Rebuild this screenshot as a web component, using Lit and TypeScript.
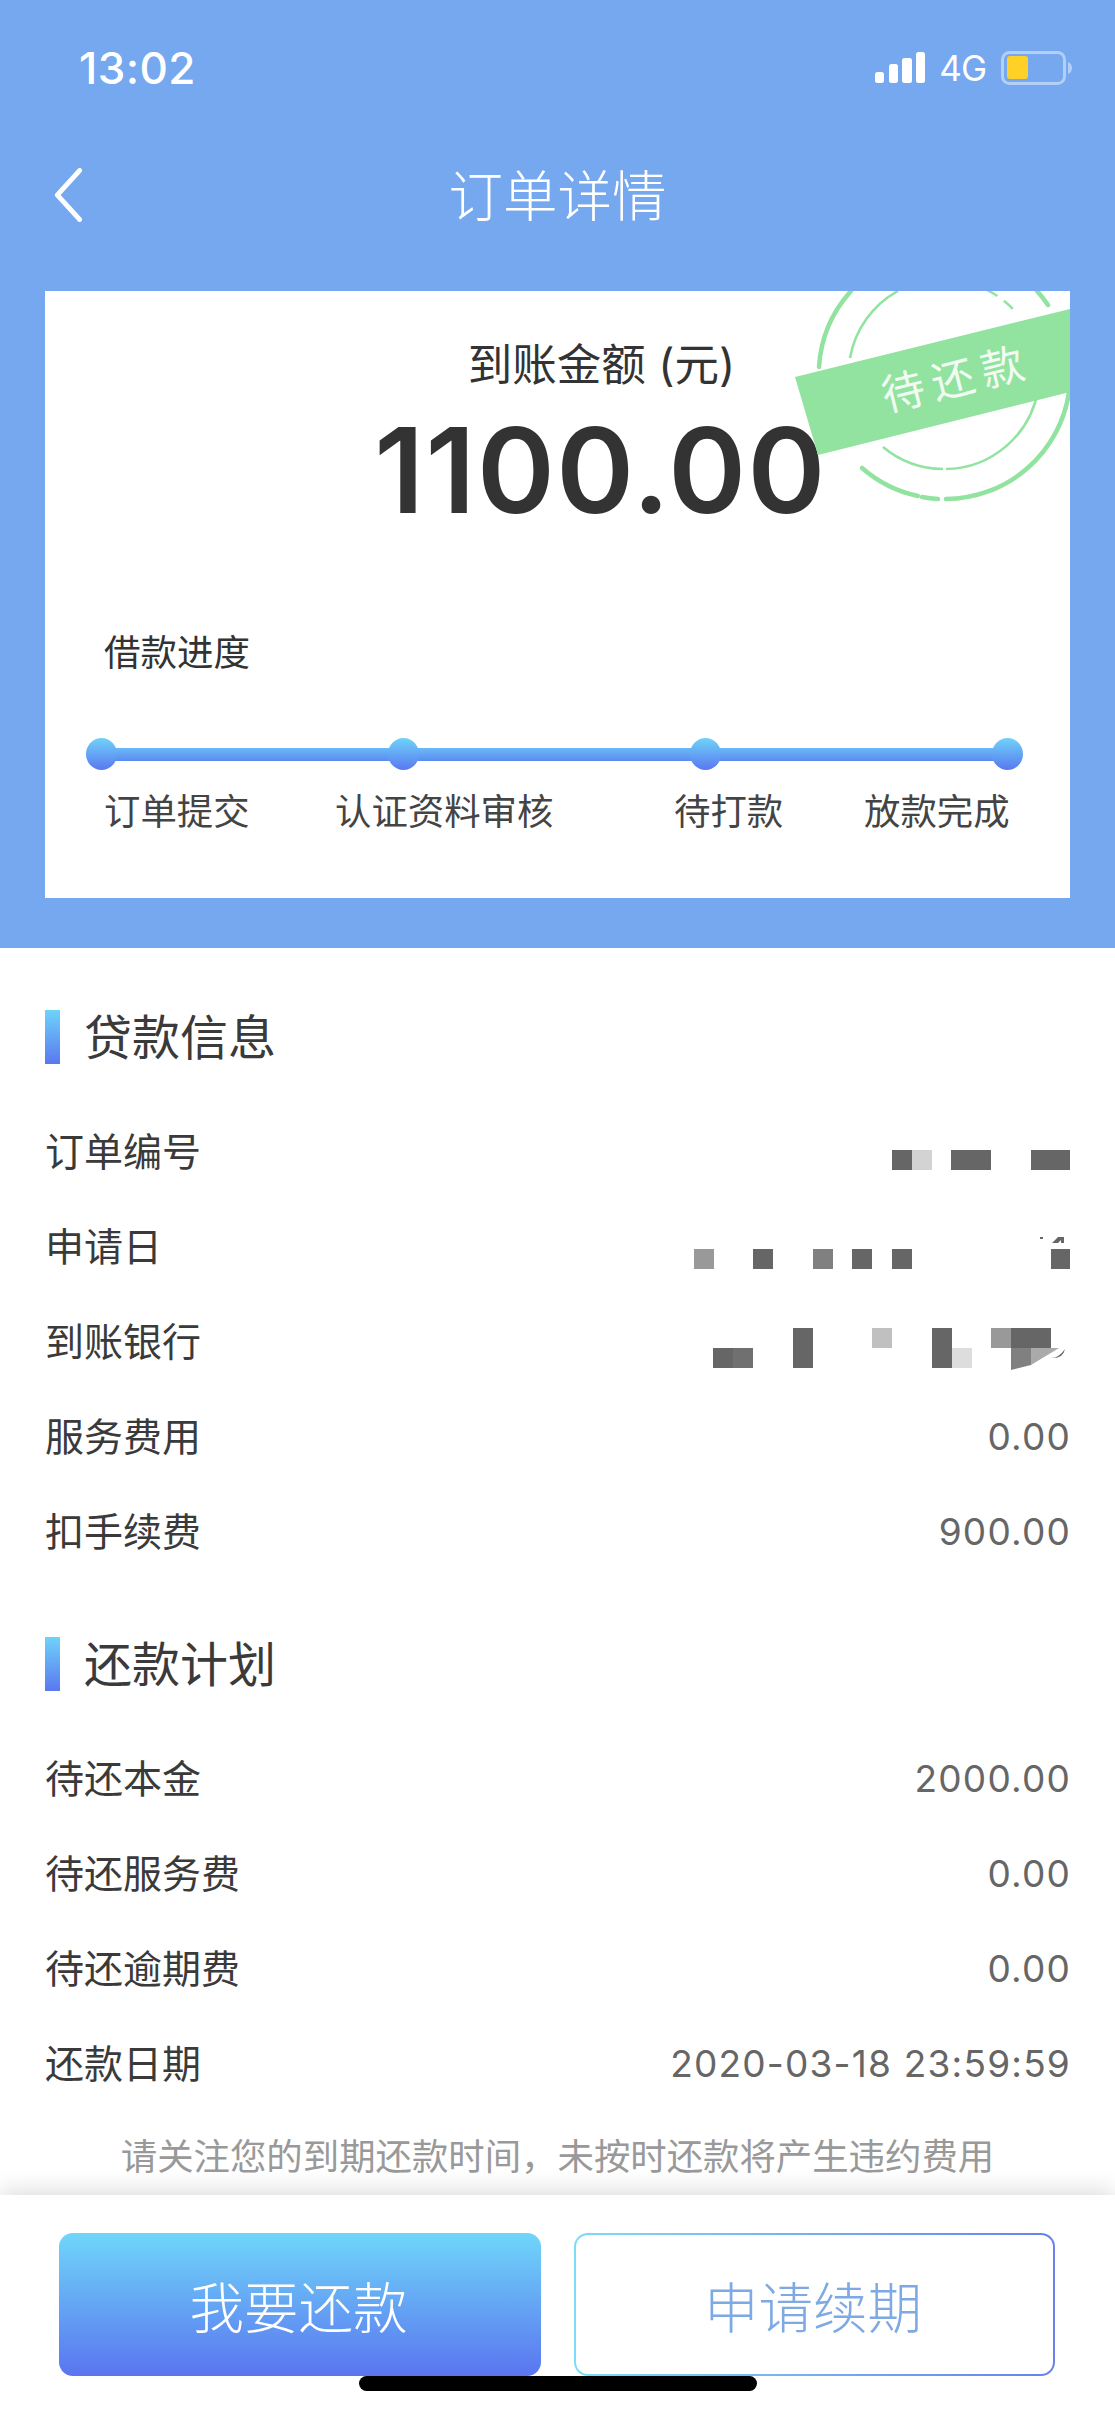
import { LitElement, html, css, svg } from "lit";
import { customElement } from "lit/decorators.js";

type Tile = [number, number, number, number, string];

const RED1: Tile[] = [
  [892, 0, 20, 20, "#666"], [912, 0, 20, 20, "#d3d3d3"], [951, 0, 40, 20, "#666"], [1031, 0, 39, 20, "#666"],
];
const RED2: Tile[] = [
  [694, 0, 20, 20, "#999"], [753, 0, 20, 20, "#666"], [813, 0, 20, 20, "#808080"],
  [852, 0, 20, 20, "#666"], [892, 0, 20, 20, "#666"], [1051, 0, 19, 20, "#666"],
];
const RED3: Tile[] = [
  [713, 20, 20, 20, "#666"], [733, 20, 20, 20, "#707070"], [793, 0, 20, 40, "#666"],
  [872, 0, 20, 20, "#c0c0c0"], [932, 0, 20, 40, "#666"], [952, 20, 20, 20, "#ddd"],
  [991, 0, 20, 20, "#999"], [1011, 0, 40, 20, "#666"],
];

const redact = (tiles: Tile[], top: number, extra?: unknown) => html`<svg class="redact" width="376" height="60" viewBox="694 ${-top} 376 60">
  ${tiles.map(([x, y, w, h, c]) => svg`<rect x=${x} y=${y} width=${w} height=${h} fill=${c}></rect>`)}
  ${extra ?? ""}
</svg>`;

@customElement("app-root")
export class AppRoot extends LitElement {
  static styles = css`
    :host {
      display: block;
      position: relative;
      width: 1115px;
      height: 2415px;
      overflow: hidden;
      background: #fff;
      font-family: Inter, "Noto Sans CJK SC", sans-serif;
      color: #333;
    }
    .page { display: flex; flex-direction: column; height: 2415px; }
    .hero { background: #75a8ee; padding: 0 45px 50px; height: 948px; box-sizing: border-box; }
    .status {
      height: 136px; margin: 0 -3px 0 34px;
      display: flex; align-items: center; justify-content: space-between; color: #fff;
    }
    .time { font-size: 44px; font-weight: 500; letter-spacing: 0.4px; }
    .sys { display: flex; align-items: center; }
    .net { font-size: 35px; margin: 0 15px 0 14px; line-height: 40px; letter-spacing: -1px; }
    .nav { height: 118px; position: relative; display: flex; align-items: center; justify-content: center; color: #fff; font-size: 54.5px; font-weight: 300; padding-bottom: 6px; box-sizing: border-box; }
    .back { position: absolute; left: 8px; top: 32px; }
    .card {
      position: relative; overflow: hidden; background: #fff; margin-top: 37px;
      height: 607px; box-sizing: border-box; padding-top: 44px;
    }
    .card-title { font-size: 44.5px; line-height: 60px; text-align: center; padding-left: 88px; }
    .amount { font-size: 118px; line-height: 120px; font-weight: 600; text-align: center; padding-left: 86px; margin-top: 15px; letter-spacing: 1.5px; }
    .stamp { position: absolute; right: 0; top: 0; }
    .loan { font-size: 36.5px; line-height: 50px; margin: 98px 0 0 59px; }
    .track {
      position: relative; margin: 60px 47px 0 41px; height: 32px;
      display: flex; justify-content: space-between; align-items: center;
    }
    .track::before {
      content: ""; position: absolute; left: 8px; right: 8px; top: 10px; height: 13px;
      background: linear-gradient(#6ab9f7, #5b8cf0);
    }
    .dot { position: relative; width: 31px; height: 32px; border-radius: 50%; background: linear-gradient(#6ed3f9, #5a78f0); }
    .steps {
      display: grid; grid-template-columns: 231px 339px 190px auto; padding-left: 59px;
      margin-top: 17px; font-size: 36.4px; line-height: 50px; color: #444;
    }
    .main { padding: 62px 45px 0; flex: 1; }
    .head { display: flex; align-items: center; height: 54px; font-size: 48px; color: #3a3a3a; }
    .head i { width: 15px; height: 54px; margin-right: 24px; background: linear-gradient(#6ed3f9, #5a78f0); }
    .head span { padding-bottom: 6px; }
    .rows { margin-top: 40px; }
    .rows + .head { margin-top: 58px; }
    .row { height: 95px; display: flex; align-items: center; justify-content: space-between; font-size: 39px; color: #3a3a3a; }
    .label { padding-bottom: 6px; }
    .val { color: #666; font-size: 37px; letter-spacing: 1.2px; margin-right: -1px; }
    .redact { display: block; }
    .hint { font-size: 36.4px; line-height: 50px; color: #999; text-align: center; margin-top: 21px; }
    .foot {
      position: relative; height: 220px; background: #fff; box-sizing: border-box;
      padding: 38px 60px 0 59px; display: flex; justify-content: space-between; align-items: flex-start;
      box-shadow: 0 -4px 22px rgba(0, 0, 0, 0.14);
    }
    .btn {
      width: 482px; height: 143px; box-sizing: border-box; border-radius: 14px;
      display: flex; align-items: center; justify-content: center; font-size: 54.5px; font-weight: 300;
    }
    .pay { background: linear-gradient(#6fd6f9, #5a75f0); color: #fff; padding-right: 3px; }
    .renew {
      width: 481px; color: #7fa9e3; border: 2px solid transparent; padding-right: 3px;
      background: linear-gradient(#fff, #fff) padding-box, linear-gradient(90deg, #7ddcf8, #6a80ec) border-box;
    }
    .indicator { position: absolute; left: 359px; top: 181px; width: 398px; height: 15px; border-radius: 8px; background: #000; }
  `;

  private row(label: string, value: unknown) {
    return html`<div class="row"><span class="label">${label}</span>${value}</div>`;
  }

  render() {
    const marks = svg`<path d="M1040 -12h3v2h-3zM1052 -6l6 -6h6v6h-3v-3l-3 3z" fill="#666"></path>`;
    const fold = svg`<path d="M1011 20h20v17l-20 5z" fill="#808080"></path><path d="M1031 20h28l-28 17z" fill="#aaa"></path><path d="M1051 30q8 0 14 -9q-2 10 -14 9z" fill="#666"></path>`;
    return html`
      <div class="page">
        <section class="hero">
          <div class="status">
            <span class="time">13:02</span>
            <div class="sys">
              <svg width="50" height="32" viewBox="0 0 50 32" fill="#fff">
                <rect x="0" y="20" width="9" height="11" rx="2.5"></rect>
                <rect x="14" y="12" width="9" height="19" rx="2.5"></rect>
                <rect x="27" y="6" width="10" height="25" rx="2.5"></rect>
                <rect x="41" y="0" width="9" height="31" rx="2.5"></rect>
              </svg>
              <span class="net">4G</span>
              <svg width="72" height="34" viewBox="0 0 72 34" fill="none">
                <rect x="1.5" y="1.5" width="62" height="31" rx="7" stroke="#fff" stroke-opacity=".45" stroke-width="3"></rect>
                <rect x="6" y="5" width="21" height="23" rx="3" fill="#ffd126"></rect>
                <path d="M67 11c3 1 4 3.500 4 6s-1 5-4 6z" fill="#fff" fill-opacity=".45"></path>
              </svg>
            </div>
          </div>
          <div class="nav">
            <svg class="back" width="30" height="54" viewBox="0 0 30 54" fill="none">
              <path d="M27 2.500L3.500 27L27 51.500" stroke="#fff" stroke-width="5" stroke-linecap="round" stroke-linejoin="round" transform="matrix(.95 0 0 1 1 0)"></path>
            </svg>
            订单详情
          </div>
          <div class="card">
            <svg class="stamp" width="300" height="240" viewBox="770 291 300 240" fill="none">
              <g stroke="#91e39f" stroke-width="4.500" stroke-linecap="round">
                <path d="M819 367A125 125 0 0 1 851 291"></path>
                <path d="M1037 291A125 125 0 0 1 1048 305"></path>
                <path d="M1069 392A125 125 0 0 1 946 499"></path>
                <path d="M938 499A125 125 0 0 1 922 497"></path>
                <path d="M918 496A125 125 0 0 1 862 468"></path>
              </g>
              <g stroke="#91e39f" stroke-width="2.500">
                <path d="M850 358A95 95 0 0 1 898 291"></path>
                <path d="M987 290A95 95 0 0 1 1013 309" stroke-dasharray="12 8"></path>
                <path d="M1038 390A95 95 0 0 1 946 469"></path>
                <path d="M943 469A95 95 0 0 1 883 447"></path>
              </g>
              <path d="M795 377L1070 309V392L818 455z" fill="#91e39f"></path>
              <text x="957" y="395" text-anchor="middle" transform="rotate(-14 953 380)" fill="#fff" fill-opacity=".88" font-size="43" letter-spacing="8" font-family="'Noto Sans CJK SC', sans-serif">待还款</text>
            </svg>
            <div class="card-title">到账金额 (元)</div>
            <div class="amount">1100.00</div>
            <div class="loan">借款进度</div>
            <div class="track"><span class="dot"></span><span class="dot"></span><span class="dot"></span><span class="dot"></span></div>
            <div class="steps"><span>订单提交</span><span>认证资料审核</span><span>待打款</span><span>放款完成</span></div>
          </div>
        </section>
        <main class="main">
          <div class="head"><i></i><span>贷款信息</span></div>
          <div class="rows">
            ${this.row("订单编号", redact(RED1, 28))}
            ${this.row("申请日", redact(RED2, 32, marks))}
            ${this.row("到账银行", redact(RED3, 16, fold))}
            ${this.row("服务费用", html`<span class="val">0.00</span>`)}
            ${this.row("扣手续费", html`<span class="val">900.00</span>`)}
          </div>
          <div class="head"><i></i><span>还款计划</span></div>
          <div class="rows">
            ${this.row("待还本金", html`<span class="val">2000.00</span>`)}
            ${this.row("待还服务费", html`<span class="val">0.00</span>`)}
            ${this.row("待还逾期费", html`<span class="val">0.00</span>`)}
            ${this.row("还款日期", html`<span class="val">2020-03-18 23:59:59</span>`)}
          </div>
          <div class="hint">请关注您的到期还款时间，未按时还款将产生违约费用</div>
        </main>
        <footer class="foot">
          <div class="btn pay">我要还款</div>
          <div class="btn renew">申请续期</div>
          <span class="indicator"></span>
        </footer>
      </div>
    `;
  }
}
